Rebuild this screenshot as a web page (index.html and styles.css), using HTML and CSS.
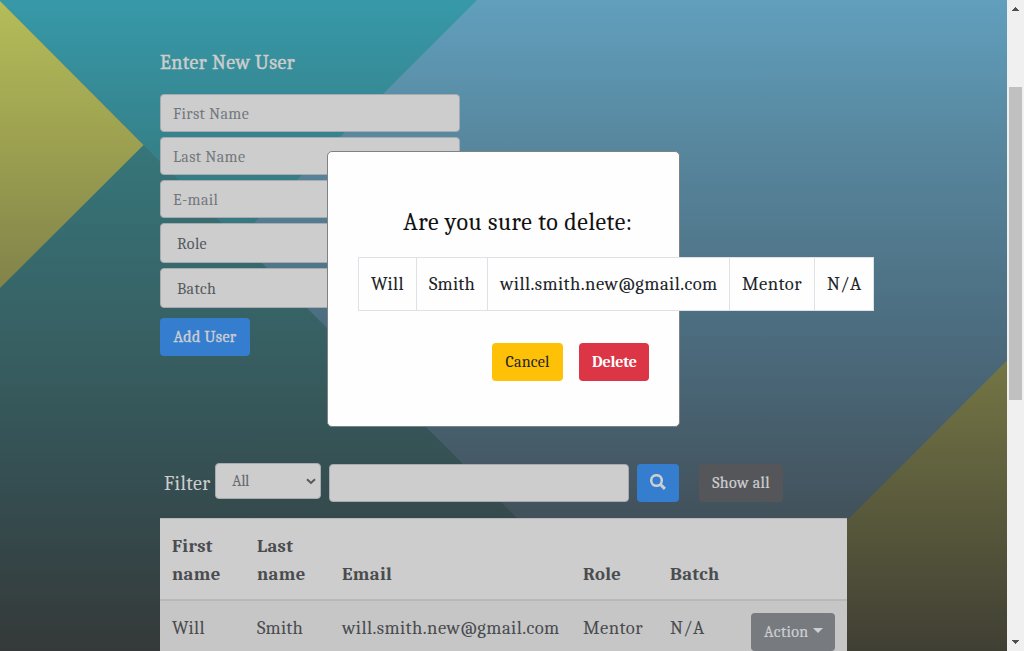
FILE: index.html
```html
<!DOCTYPE html>
<html lang="en">
<head>
<meta charset="utf-8">
<title>Users</title>
<link rel="stylesheet" href="styles.css">
</head>
<body>
<div class="window">
  <div class="viewport">
    <svg class="backdrop" viewBox="0 0 1007 651" aria-hidden="true">
      <defs>
        <linearGradient id="teal" gradientUnits="userSpaceOnUse" x1="0" y1="0" x2="0" y2="240"><stop offset="0" stop-color="#3799a8"/><stop offset=".6" stop-color="#35828b"/><stop offset="1" stop-color="#35767e"/></linearGradient>
        <linearGradient id="deep" gradientUnits="userSpaceOnUse" x1="0" y1="145" x2="0" y2="651"><stop offset="0" stop-color="#36767a"/><stop offset=".36" stop-color="#376164"/><stop offset=".7" stop-color="#354c4f"/><stop offset="1" stop-color="#353939"/></linearGradient>
        <linearGradient id="blue" gradientUnits="userSpaceOnUse" x1="0" y1="0" x2="0" y2="651"><stop offset="0" stop-color="#619fbd"/><stop offset=".23" stop-color="#57869d"/><stop offset=".5" stop-color="#4c6d80"/><stop offset=".8" stop-color="#42515a"/><stop offset="1" stop-color="#3a4045"/></linearGradient>
        <linearGradient id="lime" gradientUnits="userSpaceOnUse" x1="0" y1="0" x2="0" y2="288"><stop offset="0" stop-color="#b5bd59"/><stop offset=".5" stop-color="#9ca050"/><stop offset="1" stop-color="#81834a"/></linearGradient>
        <linearGradient id="olive" gradientUnits="userSpaceOnUse" x1="0" y1="361" x2="0" y2="651"><stop offset="0" stop-color="#747644"/><stop offset="1" stop-color="#403f34"/></linearGradient>
      </defs>
      <rect width="1007" height="651" fill="url(#blue)"/>
      <path d="M0 0H477L238 239L0 1Z" fill="url(#teal)"/>
      <path d="M0 1L650 651H0Z" fill="url(#deep)"/>
      <path d="M0 1L143.500 145L0 288Z" fill="url(#lime)"/>
      <path d="M1007 360.500V651H716.500Z" fill="url(#olive)"/>
    </svg>

    <main class="page">
      <h2 class="heading">Enter New User</h2>
      <form class="user-form">
        <input class="field" placeholder="First Name">
        <input class="field" placeholder="Last Name">
        <input class="field" placeholder="E-mail">
        <select class="field field-select"><option>Role</option></select>
        <select class="field field-select"><option>Batch</option></select>
      </form>
      <button class="btn btn-primary add">Add User</button>

      <div class="filter">
        <span class="filter-label">Filter</span>
        <div class="filter-type"><span>All</span><svg width="10" height="7" viewBox="0 0 10 7"><path d="M1 1.300L5 5L9 1.300" fill="none" stroke="#555a5e" stroke-width="2"/></svg></div>
        <input class="field filter-text" aria-label="Filter text">
        <button class="btn btn-primary search" aria-label="Search"><svg width="16" height="16" viewBox="0 0 16 16"><circle cx="6.500" cy="6.500" r="5.300" fill="none" stroke="#cdcfd2" stroke-width="2.500"/><path d="M10.300 10.300L14.900 14.900" stroke="#cdcfd2" stroke-width="3"/></svg></button>
        <button class="btn btn-dark">Show all</button>
      </div>

      <table class="users">
        <colgroup><col class="c1"><col class="c2"><col class="c3"><col class="c4"><col class="c5"><col class="c6"></colgroup>
        <thead><tr><th>First<br>name</th><th>Last<br>name</th><th>Email</th><th>Role</th><th>Batch</th><th></th></tr></thead>
        <tbody><tr><td class="given">Will</td><td class="family">Smith</td><td>will.smith.new@gmail.com</td><td>Mentor</td><td>N/A</td><td class="action-cell"><button class="btn btn-action">Action<i class="caret"></i></button></td></tr></tbody>
      </table>
    </main>

    <section class="dialog" role="dialog">
      <h3 class="dialog-title">Are you sure to delete:</h3>
      <table class="record"><tbody><tr><td class="r1 given">Will</td><td class="r2 family">Smith</td><td class="r3">will.smith.new@gmail.com</td><td class="r4">Mentor</td><td class="r5">N/A</td></tr></tbody></table>
      <div class="dialog-actions"><button class="btn btn-warning">Cancel</button><button class="btn btn-danger">Delete</button></div>
    </section>
  </div>
  <div class="scrollbar">
    <svg class="arrow" width="7" height="4" viewBox="0 0 7 4" shape-rendering="crispEdges"><path d="M3 0H4V1H5V2H6V3H7V4H0V3H1V2H2V1H3Z" fill="#505050"/></svg>
    <div class="thumb"></div>
    <svg class="arrow arrow-down" width="7" height="4" viewBox="0 0 7 4" shape-rendering="crispEdges"><path d="M0 0H7V1H6V2H5V3H4V4H3V3H2V2H1V1H0Z" fill="#505050"/></svg>
  </div>
</div>
</body>
</html>
```
FILE: styles.css
```css
* { box-sizing: border-box; }
html, body { margin: 0; height: 651px; overflow: hidden; }
body, input, select, button { font-family: Cambria, Caladea, "Liberation Serif", serif; }
.window { display: flex; height: 651px; }
.viewport { position: relative; width: 1007px; height: 651px; overflow: hidden; }
.backdrop { position: absolute; top: 0; left: 0; width: 1007px; height: 651px; }
.page { position: relative; width: 687px; margin-left: 160px; padding-top: 49px; }
.heading { margin: 0; height: 45px; font-size: 20px; line-height: 28px; font-weight: 400; letter-spacing: .42px; color: #cdcdcd; -webkit-text-stroke: .4px #cdcdcd; }
.user-form { display: flex; flex-direction: column; gap: 5px; width: 300px; }
.field { display: block; width: 300px; height: 38px; padding: 1px 12px 0; border: 1px solid #a7abb0; border-radius: 4px; background: #cdcdcd; color: #54595e; font-size: 16px; letter-spacing: .35px; outline: 0; }
.field::placeholder { color: #73787d; opacity: 1; }
.field-select { height: 40px; appearance: none; padding: 1px 16px 0; }
.btn { height: 38px; padding: 0 13px; border: 0; border-radius: 4px; font-size: 16px; white-space: nowrap; letter-spacing: .35px; color: #cdcfd2; }
.btn-primary { background: #347dcf; }
.add { display: block; width: 90px; margin-top: 10px; -webkit-text-stroke: .35px #cdcfd2; }
.filter { display: flex; margin-top: 107px; height: 39px; padding-left: 4px; }
.filter-label { width: 51px; padding-top: 8px; font-size: 20px; line-height: 26px; letter-spacing: .4px; color: #cdcdcd; }
.filter-type { display: flex; align-items: center; justify-content: space-between; width: 106px; height: 36px; padding: 0 4px 0 16px; border: 1px solid #a7abb0; border-radius: 4px; background: #cdcdcd; color: #64696e; font-size: 16px; letter-spacing: -.4px; }
.filter-text { margin: 1px 0 0 8px; }
.search { width: 42px; margin: 1px 0 0 8px; }
.search svg { display: block; margin-top: -3px; }
.btn-dark { width: 84px; margin: 1px 0 0 20px; background: #555659; -webkit-text-stroke: .2px #cdcfd2; }
.users { width: 687px; margin-top: 16px; border-collapse: separate; border-spacing: 0; table-layout: fixed; font-size: 18.67px; line-height: 28px; color: #4a4c50; background: #cdcdcd; letter-spacing: .42px; }
.c1, .c2 { width: 85px; }
.c3 { width: 241px; }
.c4 { width: 87px; }
.c5 { width: 81px; }
.c6 { width: 108px; }
.users th { height: 83px; padding: 13px 12px 11px; text-align: left; vertical-align: bottom; border-top: 1px solid #b5b8ba; border-bottom: 2px solid #b6b8ba; letter-spacing: .35px; }
.users td { height: 64px; padding: 13px 0 12px 12px; vertical-align: top; background: #c6c6c6; white-space: nowrap; }
.users .given, .record .given { letter-spacing: .35px; }
.users .family, .record .family { letter-spacing: .15px; }
.users .action-cell { padding-top: 12px; padding-right: 12px; text-align: right; line-height: 0; }
.btn-action { width: 84px; background: #777b80; text-align: left; line-height: 38px; -webkit-text-stroke: .2px #cdcfd2; }
.caret { display: inline-block; margin-left: 4px; vertical-align: 4px; border: 5px solid transparent; border-top-color: #cdcfd2; border-bottom: 0; }
.dialog { position: absolute; left: 327px; top: 151px; width: 353px; height: 276px; padding: 53px 30px 0; background: #fefefe; border: 1px solid #7d8285; border-radius: 5px; }
.dialog-title { margin: 0 0 18px; padding-left: 28px; width: 292px; text-align: center; font-size: 24px; line-height: 34px; font-weight: 400; color: #111; letter-spacing: .54px; white-space: nowrap; }
.record { width: 516px; table-layout: fixed; border-collapse: collapse; background: #fefefe; color: #212529; font-size: 18.67px; line-height: 28px; letter-spacing: .42px; white-space: nowrap; }
.record td { height: 53px; padding: 12px 0 12px 12px; border: 1px solid #dee2e6; }
.r1 { width: 58px; }
.r2 { width: 71px; }
.r3 { width: 242px; }
.r4 { width: 85px; }
.r5 { width: 59px; }
.dialog-actions { display: flex; justify-content: flex-end; gap: 16px; margin-top: 32px; }
.btn-warning { width: 71px; background: #ffc107; color: #212529; letter-spacing: .2px; }
.btn-danger { width: 70px; background: #dc3545; color: #fff; font-weight: 700; letter-spacing: -.2px; }
.scrollbar { width: 17px; height: 651px; background: #f0f0f0; display: flex; flex-direction: column; align-items: center; padding: 7px 0; }
.thumb { width: 13px; height: 313px; margin: 76px 2px 0; background: #c0c0c0; }
.arrow { display: block; }
.arrow-down { margin-top: auto; }
```
